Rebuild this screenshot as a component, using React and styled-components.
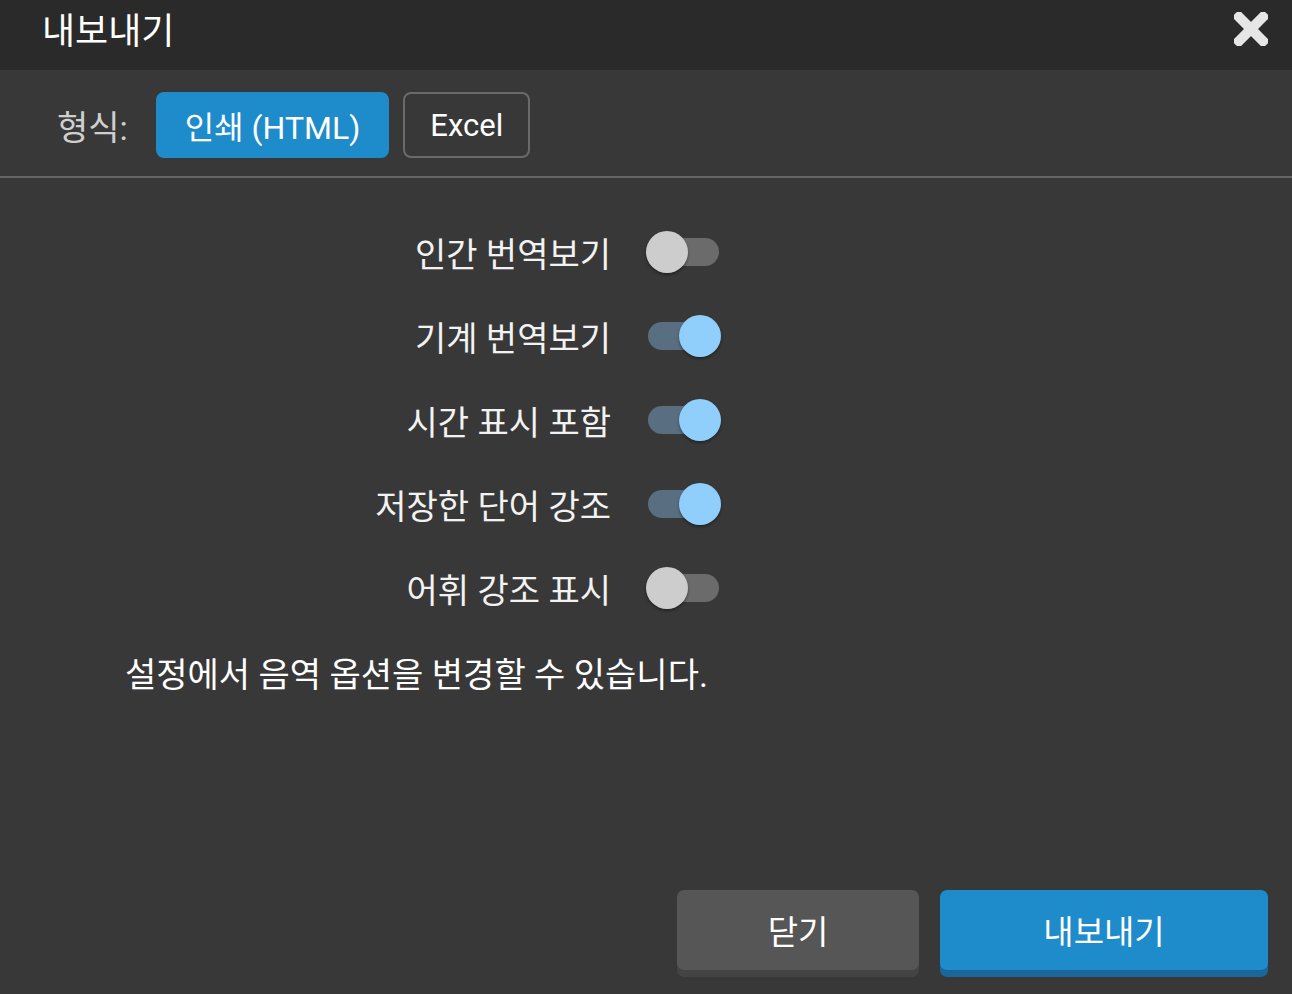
import React from 'react'
import styled, { createGlobalStyle } from 'styled-components'

const GlobalStyle = createGlobalStyle`
  html, body {
    margin: 0;
    padding: 0;
    background: #383838;
  }
  body {
    font-family: Roboto, "Noto Sans CJK KR", sans-serif;
    color: #fff;
  }
`

const Dialog = styled.div`
  display: flex;
  flex-direction: column;
  height: 994px;
  background: #383838;
`

const Header = styled.header`
  display: flex;
  justify-content: space-between;
  align-items: flex-start;
  height: 70px;
  box-sizing: border-box;
  padding: 11px 24px 0 42px;
  background: #2a2a2a;
`

const Title = styled.h1`
  margin: 0;
  font-size: 36px;
  font-weight: 400;
  line-height: 42px;
  color: #fff;
`

const CloseButton = styled.button`
  display: flex;
  padding: 0;
  margin-top: 1px;
  border: none;
  background: none;
  cursor: pointer;
`

const FormatRow = styled.div`
  display: flex;
  align-items: center;
  height: 108px;
  box-sizing: border-box;
  padding: 4px 0 0 57px;
  border-bottom: 2px solid #666;
`

const FormatLabel = styled.span`
  font-size: 34px;
  color: #cfcfcf;
  margin-right: 28px;
`

const FormatButton = styled.button`
  height: 66px;
  padding: 0 ${p => (p.$active ? '27px' : '25px')};
  margin-right: 14px;
  border-radius: 8px;
  border: 2px solid ${p => (p.$active ? '#1e8bcb' : '#6a6a6a')};
  background: ${p => (p.$active ? '#1e8bcb' : 'transparent')};
  color: #fff;
  font-family: inherit;
  font-size: ${p => (p.$active ? '32px' : '31px')};
  cursor: pointer;
`

const Options = styled.div`
  display: grid;
  grid-template-columns: 1fr 1fr;
  grid-auto-rows: 84px;
  padding-top: 32px;
`

const OptionLabel = styled.span`
  justify-self: end;
  align-self: center;
  padding-right: 35px;
  font-size: 34px;
  color: #f2f2f2;
`

const Switch = styled.button`
  position: relative;
  align-self: center;
  width: 75px;
  height: 42px;
  padding: 0;
  border: none;
  background: none;
  cursor: pointer;

  &::before {
    content: '';
    position: absolute;
    left: 2px;
    top: 7px;
    width: 71px;
    height: 28px;
    border-radius: 14px;
    background: ${p => (p.$on ? '#596e80' : '#6b6b6b')};
  }

  &::after {
    content: '';
    position: absolute;
    top: 0;
    left: ${p => (p.$on ? '33px' : '0')};
    width: 42px;
    height: 42px;
    border-radius: 50%;
    background: ${p => (p.$on ? '#90cefc' : '#cdcdcd')};
    box-shadow: 0 2px 3px rgba(0, 0, 0, 0.35);
  }
`

const Note = styled.p`
  margin: 0;
  height: 84px;
  display: flex;
  align-items: center;
  padding-left: 125px;
  font-size: 34px;
  color: #fff;
`

const Footer = styled.footer`
  display: flex;
  justify-content: flex-end;
  gap: 21px;
  margin-top: auto;
  padding: 0 24px 24px 0;
`

const ActionButton = styled.button`
  width: ${p => (p.$primary ? '328px' : '242px')};
  height: 80px;
  border: none;
  border-radius: 7px;
  background: ${p => (p.$primary ? '#1e8bcb' : '#565656')};
  box-shadow: 0 7px 0 ${p => (p.$primary ? '#1b679b' : '#444')};
  color: #fff;
  font-family: inherit;
  font-size: 33px;
  cursor: pointer;
`

const CloseIcon = () => (
  <svg width="34" height="34" viewBox="0 0 34 34" fill="#e6e6e6">
    <rect x="-5" y="12" width="44" height="10" rx="3" transform="rotate(45 17 17)" />
    <rect x="-5" y="12" width="44" height="10" rx="3" transform="rotate(-45 17 17)" />
  </svg>
)

const options = [
  { label: '인간 번역보기', on: false },
  { label: '기계 번역보기', on: true },
  { label: '시간 표시 포함', on: true },
  { label: '저장한 단어 강조', on: true },
  { label: '어휘 강조 표시', on: false },
]

const App = () => {
  return (
    <Dialog>
      <GlobalStyle />
      <Header>
        <Title>내보내기</Title>
        <CloseButton aria-label="닫기">
          <CloseIcon />
        </CloseButton>
      </Header>
      <FormatRow>
        <FormatLabel>형식:</FormatLabel>
        <FormatButton $active>인쇄 (HTML)</FormatButton>
        <FormatButton>Excel</FormatButton>
      </FormatRow>
      <Options>
        {options.map(o => (
          <React.Fragment key={o.label}>
            <OptionLabel>{o.label}</OptionLabel>
            <Switch $on={o.on} aria-label={o.label} />
          </React.Fragment>
        ))}
      </Options>
      <Note>설정에서 음역 옵션을 변경할 수 있습니다.</Note>
      <Footer>
        <ActionButton>닫기</ActionButton>
        <ActionButton $primary>내보내기</ActionButton>
      </Footer>
    </Dialog>
  )
}

export default App
